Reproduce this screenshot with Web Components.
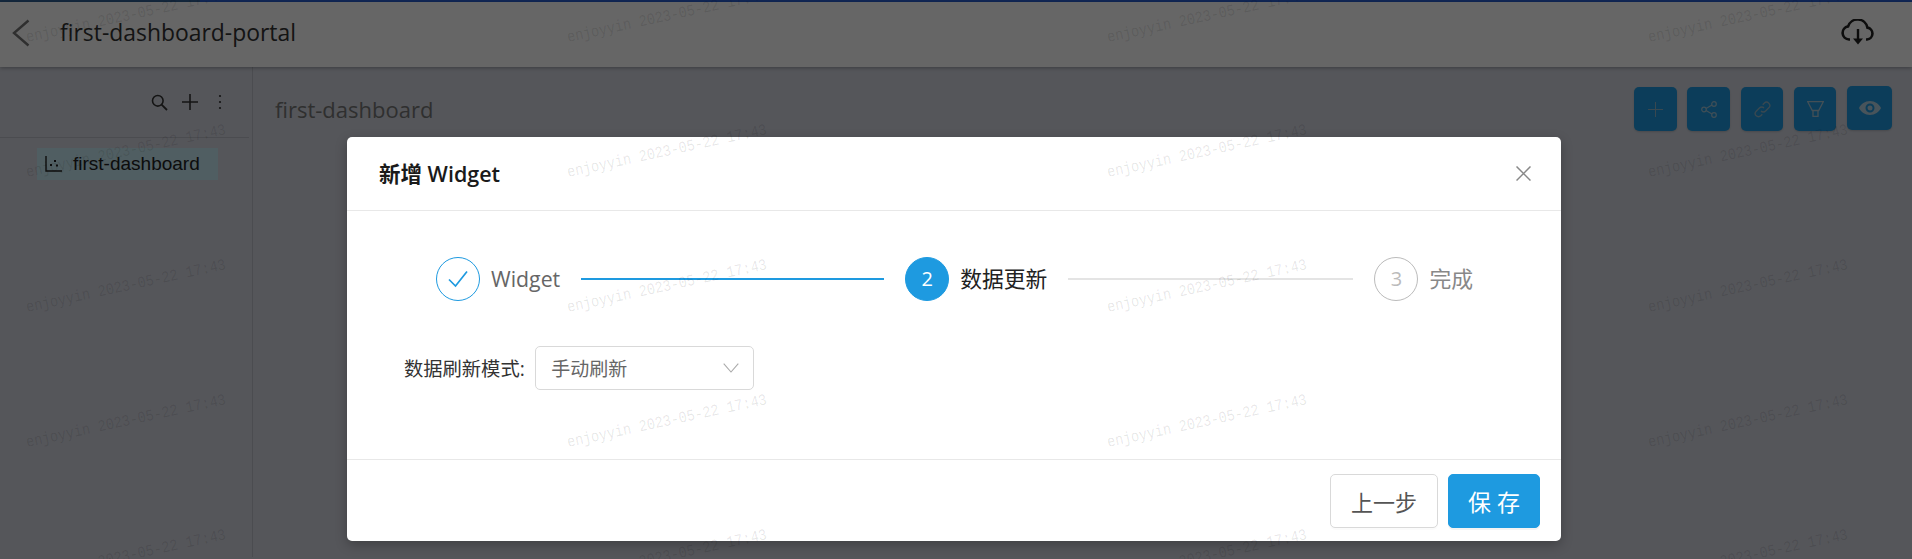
<!DOCTYPE html>
<html lang="zh"><head><meta charset="utf-8"><title>first-dashboard-portal</title>
<style>
html,body{margin:0;padding:0;height:559px;overflow:hidden;background:#d4d7e1;font-family:"Open Sans","Noto Sans CJK SC",sans-serif}
</style></head><body>
<dash-page>
  <dash-header slot="header" title-text="first-dashboard-portal"></dash-header>
  <dash-sidebar slot="side" item="first-dashboard"></dash-sidebar>
  <dash-main slot="main" title-text="first-dashboard"></dash-main>
  <modal-dialog slot="modal" heading="新增 Widget">
    <step-bar>
      <step-item state="done" label="Widget"></step-item>
      <step-line state="done" w="303"></step-line>
      <step-item state="active" num="2" label="数据更新"></step-item>
      <step-line w="285"></step-line>
      <step-item state="wait" num="3" label="完成"></step-item>
    </step-bar>
    <form-row label="数据刷新模式:"><select-box value="手动刷新"></select-box></form-row>
    <flat-button slot="footer">上一步</flat-button>
    <flat-button slot="footer" primary>保 存</flat-button>
  </modal-dialog>
  <water-mark slot="wm"></water-mark>
</dash-page>
<script>
function def(name, css, html, init){
  customElements.define(name, class extends HTMLElement{
    constructor(){super();this.attachShadow({mode:'open'});}
    connectedCallback(){
      const a=k=>this.getAttribute(k)||'';
      this.shadowRoot.innerHTML='<style>'+css+'</style>'+(typeof html==='function'?html(a,this):html);
      if(init)init(this.shadowRoot,a,this);
    }
  });
}
const I=(w,h,vb,body,extra)=>`<svg width="${w}" height="${h}" viewBox="${vb}" fill="none" stroke="currentColor" ${extra||''}>${body}</svg>`;

def('dash-page',`
:host{display:block;position:relative;width:1912px;height:559px;overflow:hidden}
.top{height:2px;display:flex}.top i{display:block;width:200px;background:#32649a}.top b{display:block;flex:1;background:#2a62d8}
.body{display:flex;height:490px}
.mask{position:absolute;inset:0;background:rgba(0,0,0,.6);padding:137px 0 0 347px;box-sizing:border-box}
`,`<div class="top"><i></i><b></b></div><slot name="header"></slot><div class="body"><slot name="side"></slot><slot name="main"></slot></div><div class="mask"><slot name="modal"></slot></div><slot name="wm"></slot>`);

def('dash-header',`
:host{display:flex;align-items:center;height:65px;background:#fff;box-shadow:0 1px 4px rgba(0,0,0,.3);position:relative;color:#333;padding:0 37px 0 12px;box-sizing:border-box}
svg{display:block}
.t{font-size:22.900px;margin-left:30px;flex:1;line-height:30px;margin-top:-3px}
.back{color:#777;margin-top:-4px}
.cloud{color:#222;margin-top:-6px}
`,a=>`<span class="back">${I(18,28,'0 0 18 28','<path d="M16.500 1.500 2 14l14.500 12.500" stroke-width="2.400"/>')}</span><span class="t">${a('title-text')}</span>
<span class="cloud">${I(34,26,'0 0 34 26','<path d="M9 20.500H8a6.600 6.600 0 0 1-.9-13.100A10 10 0 0 1 26.400 8.600a6 6 0 0 1-.4 11.900h-1" stroke-width="2.600"/><path d="M17 10v11" stroke-width="2.400"/><path d="M12 19.500h10L17 25.500z" fill="currentColor" stroke="none"/>')}</span>`);

def('dash-sidebar',`
:host{display:block;width:253px;box-sizing:border-box;border-right:1px solid #bcbfc9;color:#333}
.tools{height:71px;box-sizing:border-box;margin-right:3px;border-bottom:1px solid #bcbfc9;display:flex;justify-content:flex-end;align-items:flex-start;padding:27px 27px 0 0}
svg{display:block}
.tools span{display:block}
.s{margin-right:14px}.p{margin-right:20px}
.item{margin:10px 34px 0 37px;height:32px;background:#c8eaf5;display:flex;align-items:center;font:19px/32px "Liberation Sans",sans-serif;padding-left:8px;color:#222}
.item svg{margin-right:11px}
`,a=>`<div class="tools"><span class="s">${I(17,17,'0 0 17 17','<circle cx="6.800" cy="6.800" r="5.300" stroke-width="1.600"/><path d="M10.600 10.600 16 16" stroke-width="1.800"/>')}</span><span class="p">${I(16,16,'0 0 16 16','<path d="M8 0v16M0 8h16" stroke-width="1.600"/>')}</span><span>${I(4,16,'0 0 4 16','<circle cx="2" cy="2" r="1.100" fill="currentColor" stroke="none"/><circle cx="2" cy="8" r="1.100" fill="currentColor" stroke="none"/><circle cx="2" cy="14" r="1.100" fill="currentColor" stroke="none"/>')}</span></div>
<div class="item">${I(17,16,'0 0 17 16','<path d="M1 0v15h16" stroke-width="1.400"/><g fill="currentColor" stroke="none"><rect x="5" y="8" width="2" height="2"/><rect x="9" y="4" width="2" height="2"/><rect x="11" y="8.500" width="2" height="2"/></g>')}${a('item')}</div>`);

def('dash-main',`
:host{display:flex;flex:1;justify-content:space-between;align-items:flex-start;padding:20px 20px 0 22px;box-sizing:border-box;color:#777}
.t{font-size:22px;line-height:36px;margin-top:4px}
.btns{display:flex;align-items:flex-start}
`,a=>`<div class="t">${a('title-text')}</div><div class="btns">
<icon-btn w="43"><svg width="15" height="15" viewBox="0 0 15 15" stroke="#8fb3c8" fill="none"><path d="M7.500 0v15M0 7.500h15"/></svg></icon-btn>
<icon-btn w="43" ml="10"><svg width="16" height="17" viewBox="0 0 16 17" stroke="#9fc3d8" fill="none" stroke-width="1.200"><circle cx="3" cy="8.500" r="2.300"/><circle cx="13" cy="3" r="2.300"/><circle cx="13" cy="14" r="2.300"/><path d="M5 7.400 11 4M5 9.600 11 13"/></svg></icon-btn>
<icon-btn w="42" ml="11"><svg width="17" height="17" viewBox="0 0 17 17" stroke="#8fb3c8" fill="none" stroke-width="1.300"><path d="M7 10a3.200 3.200 0 0 0 4.600 0l3.200-3.200a3.200 3.200 0 0 0-4.600-4.600L8.700 3.700"/><path d="M10 7a3.200 3.200 0 0 0-4.600 0L2.200 10.200a3.200 3.200 0 0 0 4.600 4.600l1.500-1.500"/></svg></icon-btn>
<icon-btn w="42" ml="11"><svg width="17" height="16" viewBox="0 0 17 16" stroke="#a8c6d8" fill="none" stroke-width="1.300"><path d="M.7.700h15.600l-4.600 8.800H5.300zM6 9.500h5v5.800H6z"/></svg></icon-btn>
<icon-btn w="45" ml="11" up><svg width="22" height="14" viewBox="0 0 22 14"><path fill-rule="evenodd" fill="#b5d2e3" d="M11 0c5 0 9 3 11 7-2 4-6 7-11 7S2 11 0 7c2-4 6-7 11-7zm0 2.500a4.500 4.500 0 1 0 0 9 4.500 4.500 0 0 0 0-9zm0 2a2.500 2.500 0 1 1 0 5 2.500 2.500 0 0 1 0-5z"/></svg></icon-btn></div>`);

def('icon-btn',`
:host{display:flex;align-items:center;justify-content:center;height:44px;box-sizing:border-box;background:#1e9ae0;border-radius:5px;box-shadow:0 1px 2px rgba(0,0,0,.15)}
svg{display:block}`,`<slot></slot>`,(r,a,h)=>{h.style.width=a('w')+'px';if(a('ml'))h.style.marginLeft=a('ml')+'px';if(h.hasAttribute('up'))h.style.marginTop='-1px';});

def('modal-dialog',`
:host{display:flex;width:1214px;height:404px;background:#fff;border-radius:5px;box-shadow:0 4px 12px rgba(0,0,0,.25);flex-direction:column;overflow:hidden}
header{height:74px;box-sizing:border-box;border-bottom:1px solid #e8e8e8;display:flex;align-items:center;justify-content:space-between;padding:0 30px 0 32px;font-size:21.500px;color:#1a1a1a;font-weight:600}
header span{position:relative;top:-1px}
.b{flex:1;height:0;min-height:248px}
footer{height:82px;box-sizing:border-box;border-top:1px solid #e8e8e8;display:flex;justify-content:flex-end;align-items:flex-start;padding:14px 21px 0 0;gap:10px}
svg{display:block;color:#888}
`,a=>`<header><span>${a('heading')}</span>${I(15,15,'0 0 15 15','<path d="M.5.500l14 14M14.500.500l-14 14" stroke-width="1.500"/>')}</header><div class="b"><slot></slot></div><footer><slot name="footer"></slot></footer>`);

def('step-bar',`:host{display:flex;align-items:center;padding:46px 0 0 89px}`,`<slot></slot>`);
def('step-item',`
:host{display:flex;align-items:center;height:44px;font-size:21.300px;line-height:44px;font-family:"Open Sans","Noto Sans CJK SC",sans-serif}
.c{width:44px;height:44px;border-radius:50%;box-sizing:border-box;display:flex;align-items:center;justify-content:center;font-size:20px;margin-right:11px;border:1px solid #1e9ae0;color:#1e9ae0}
svg{display:block}
:host([state=done]){color:#666}
:host([state=active]){color:#222}
:host([state=active]) .c{background:#1e9ae0;color:#fff}
:host([state=wait]){color:#888}
:host([state=wait]) .c{border-color:#bbb;color:#bbb}
.l.cj{font-size:21.800px}
`,a=>`<div class="c">${a('state')==='done'?I(20,18,'0 0 20 18','<path d="M1 9.500 7.500 16 19 1.500" stroke-width="1.700"/>'):a('num')}</div><div class="l ${a('label')==='Widget'?'':'cj'}">${a('label')}</div>`);
def('step-line',`:host{display:block;height:2px;margin:0 21px 0 21px;background:#e4e4e4}:host([state=done]){background:#1e9ae0}`,``,(r,a,h)=>{h.style.width=a('w')+'px'});

def('form-row',`
:host{display:flex;align-items:center;margin:45px 0 0 57px;font-size:19.300px;color:#333}
.l{margin-right:10.500px}`,a=>`<span class="l">${a('label')}</span><slot></slot>`);
def('select-box',`
:host{display:flex;align-items:center;justify-content:space-between;width:219px;height:44px;box-sizing:border-box;border:1px solid #d9d9d9;border-radius:5px;padding:0 14px 0 15px;font-size:19px;color:#666;background:#fff}
svg{display:block;color:#aaa}`,a=>`<span>${a('value')}</span>${I(16,10,'0 0 16 10','<path d="M.7.700 8 9 15.300.700" stroke-width="1.100"/>')}`);
def('flat-button',`
:host{display:flex;align-items:center;justify-content:center;height:54px;width:108px;box-sizing:border-box;border:1px solid #d9d9d9;border-radius:5px;font-size:22px;color:#555;background:#fff;box-shadow:0 2px 0 rgba(0,0,0,.015)}
:host([primary]){width:92px;background:#1e9ae0;border-color:#1e9ae0;color:#fff;font-size:23px;box-shadow:0 2px 0 rgba(0,0,0,.045)}`,`<slot></slot>`);

def('water-mark',`
:host{display:block;position:absolute;inset:0;pointer-events:none;overflow:hidden;font-family:"Liberation Mono",monospace}
span{position:absolute;white-space:pre;transform-origin:0 100%;line-height:1}
.a{font-size:16px;transform:rotate(-12.200deg) scaleX(.85);color:rgba(0,0,0,.1)}
.b{font-size:16.800px;color:rgba(0,0,0,.025)}
`,()=>{
  let s='';
  for(const x of [28,569,1109,1650]) for(const y of [46,181,316,451,586])
    s+=`<span class="a" style="left:${x}px;top:${y-16}px">enjoyyin 2023-05-22 17:43</span>`;
  const rows={110:[58,203,348,493],415:[15,160,303,450],718:[15,160,303,450],1020:[15,158,303,450],1322:[15,158,303,450],1622:[37,177,320,465]};
  for(const x in rows) for(const y of rows[x])
    s+=`<span class="b" style="left:${x}px;top:${y-9}px">xinyunzhou 2023-05-22</span>`;
  return s;
});
</script></body></html>
